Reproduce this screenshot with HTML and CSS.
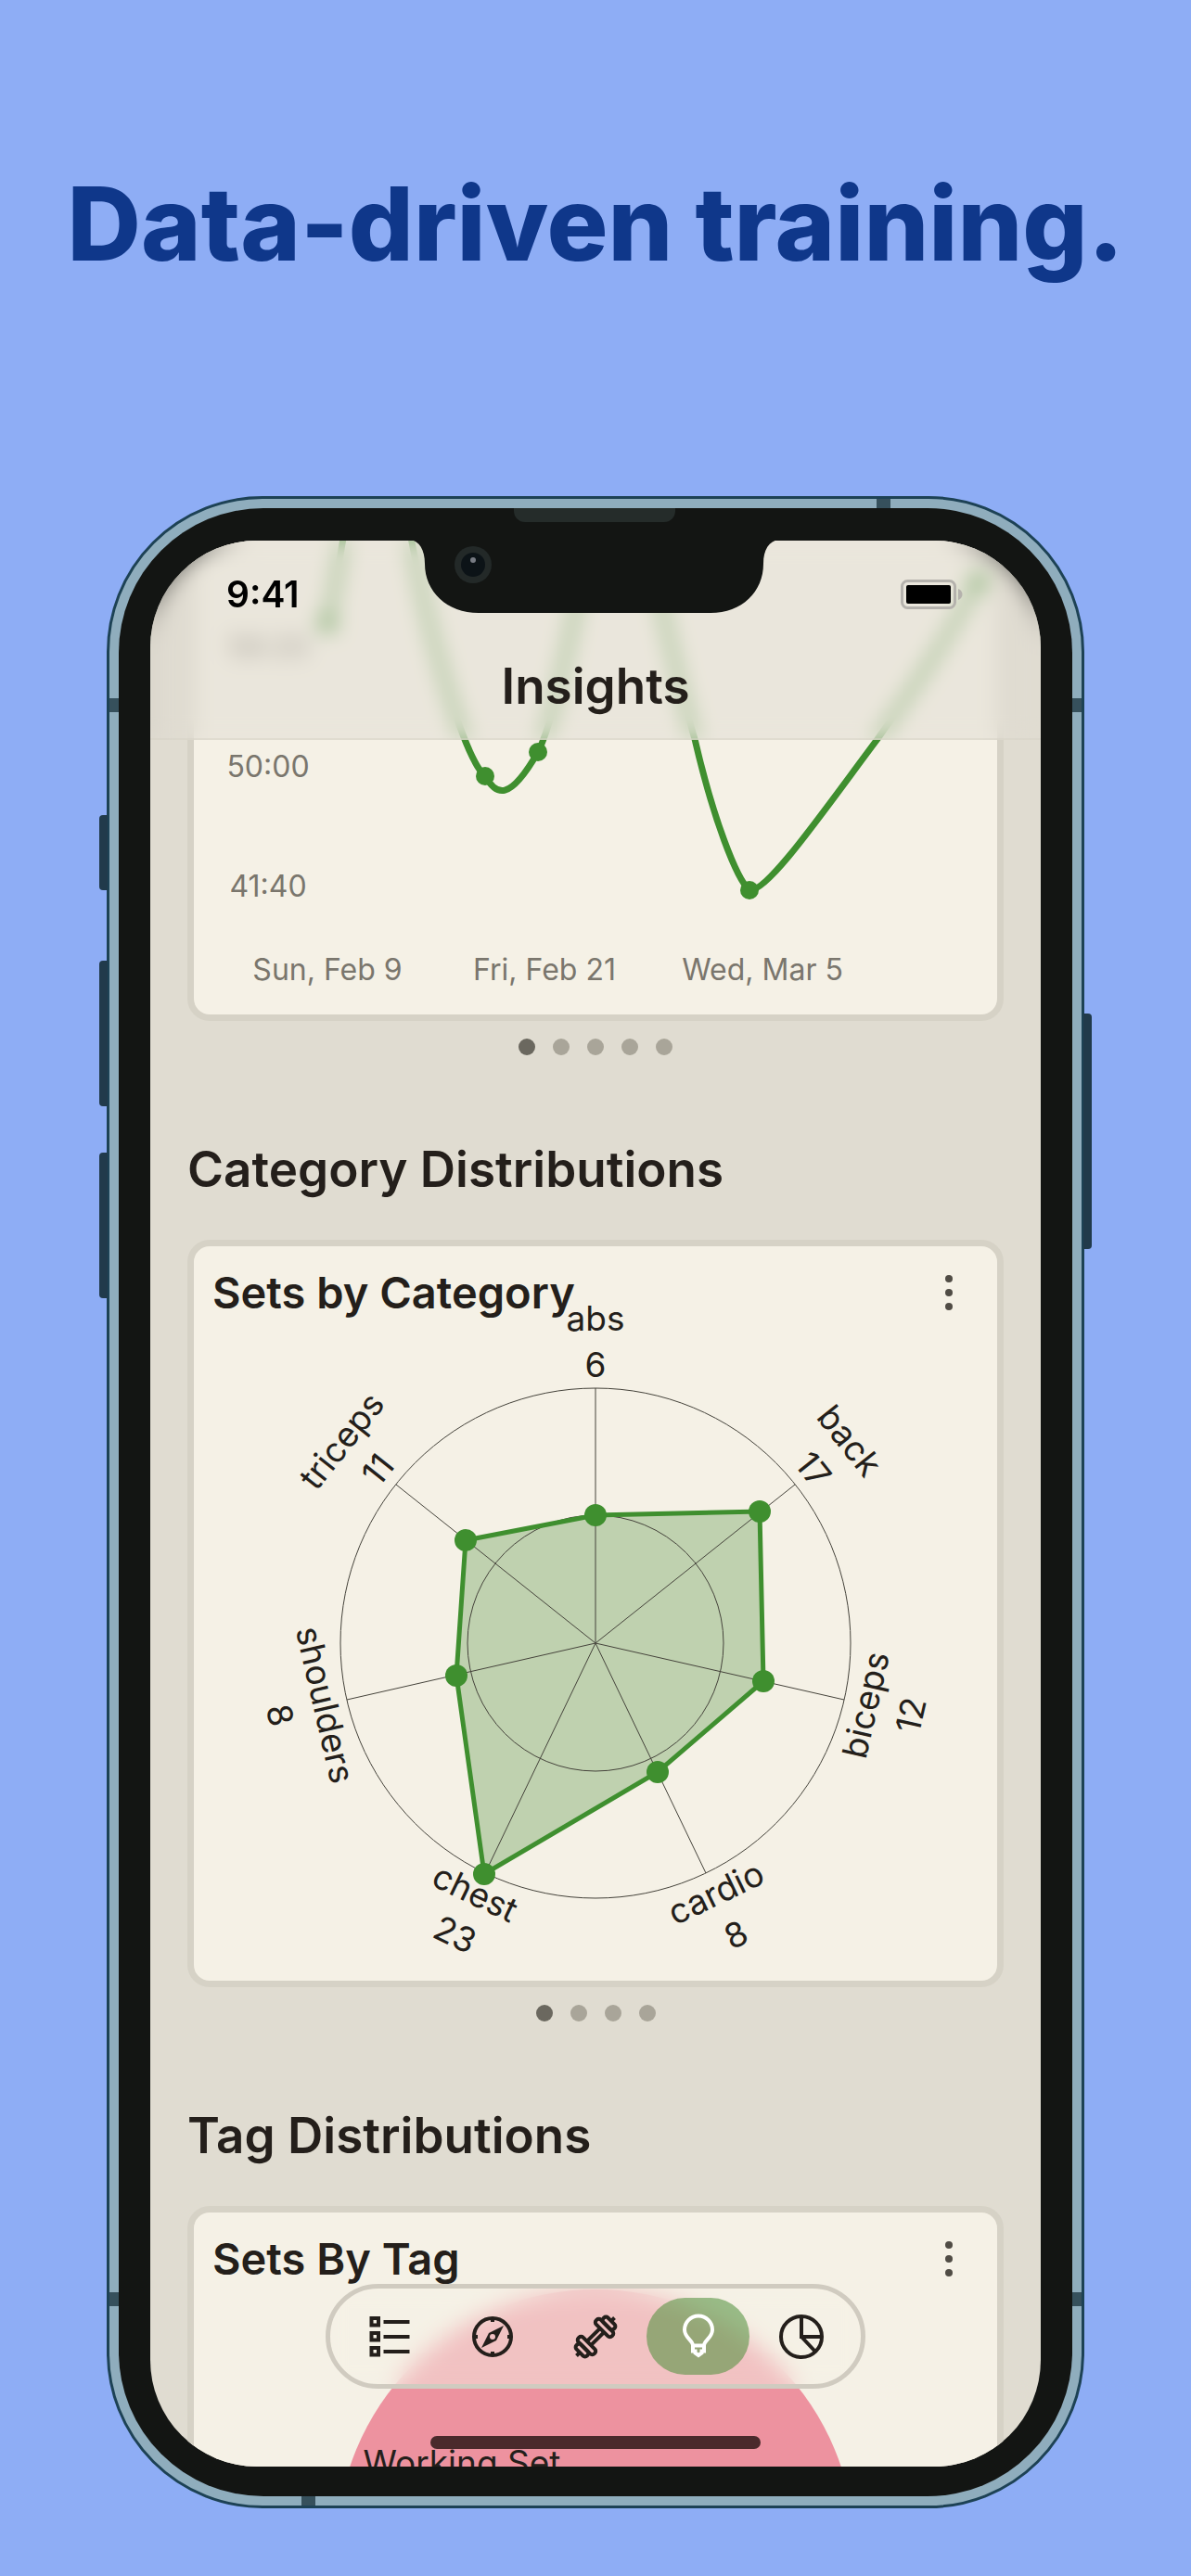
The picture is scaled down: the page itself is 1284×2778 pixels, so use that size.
FILE: index.html
```html
<!DOCTYPE html>
<html lang="en">
<head>
<meta charset="utf-8">
<meta name="viewport" content="width=device-width, initial-scale=1">
<title>Data-driven training.</title>
<link rel="stylesheet" href="styles.css">
</head>
<body>
<main class="page">
  <h1 class="headline">Data-driven training.</h1>

  <div class="phone">
    <span class="side-key key-mute"></span>
    <span class="side-key key-up"></span>
    <span class="side-key key-down"></span>
    <span class="side-key key-power"></span>
    <span class="band band-left band-high"></span>
    <span class="band band-right band-high"></span>
    <span class="band band-left band-low"></span>
    <span class="band band-right band-low"></span>
    <span class="band band-top"></span>
    <span class="band band-bottom"></span>

    <div class="bezel">
      <span class="speaker"></span>
      <div class="screen">
        <div class="feed">
          <section class="card card-scrolled" aria-label="Workout duration">
            <svg class="chart" viewBox="0 0 866 511" role="img" aria-label="Duration over time">
              <path class="trend" d="M144 89C165 0 175 -140 197 -140C217 -140 230 10 262 120C280 185 298 240 314 254C326 275 340 282 371 228C385 200 395 150 411 78C425 10 440 -100 460 -100C480 -100 490 10 506 78C520 140 530 180 540 214C560 300 585 365 599 377C618 380 680 290 737 214C775 160 810 110 846 44"/>
              <g class="point">
                <circle cx="144" cy="89" r="10"/>
                <circle cx="314" cy="254" r="10"/>
                <circle cx="371" cy="228" r="10"/>
                <circle cx="599" cy="377" r="10"/>
                <circle cx="846" cy="44" r="10"/>
              </g>
              <g class="axis-text">
                <text x="80" y="126">58:20</text>
                <text x="80" y="255">50:00</text>
                <text x="80" y="384">41:40</text>
                <text x="144" y="474">Sun, Feb 9</text>
                <text x="378" y="474">Fri, Feb 21</text>
                <text x="613" y="474">Wed, Mar 5</text>
              </g>
            </svg>
          </section>
          <div class="dots"><i class="on"></i><i></i><i></i><i></i><i></i></div>

          <h2 class="section-title">Category Distributions</h2>
          <section class="card">
            <header class="card-head">
              <h3>Sets by Category</h3>
              <button class="more" aria-label="More options"><i></i><i></i><i></i></button>
            </header>
            <svg class="chart" viewBox="0 0 866 712" role="img" aria-label="Sets by category">
              <polygon class="area" points="433,210 610,206 614,389 500,487 313,597 283,383 293,237"/>
              <g class="grid">
                <circle cx="433" cy="348" r="275"/>
                <circle cx="433" cy="348" r="138"/>
                <path d="M433 348V73M433 348L648 177M433 348L701 409M433 348L552 596M433 348L314 596M433 348L165 409M433 348L218 177"/>
              </g>
              <polygon class="outline" points="433,210 610,206 614,389 500,487 313,597 283,383 293,237"/>
              <g class="point">
                <circle cx="433" cy="210" r="12"/>
                <circle cx="610" cy="206" r="12"/>
                <circle cx="614" cy="389" r="12"/>
                <circle cx="500" cy="487" r="12"/>
                <circle cx="313" cy="597" r="12"/>
                <circle cx="283" cy="383" r="12"/>
                <circle cx="293" cy="237" r="12"/>
              </g>
              <g class="spoke-text">
                <g><text x="433" y="11">abs</text><text x="433" y="61">6</text></g>
                <g transform="rotate(51.43 433 348)"><text x="433" y="11">back</text><text x="433" y="61">17</text></g>
                <g transform="rotate(-77.14 433 348)"><text x="433" y="660">biceps</text><text x="433" y="710">12</text></g>
                <g transform="rotate(-25.71 433 348)"><text x="433" y="660">cardio</text><text x="433" y="710">8</text></g>
                <g transform="rotate(25.71 433 348)"><text x="433" y="660">chest</text><text x="433" y="710">23</text></g>
                <g transform="rotate(77.14 433 348)"><text x="433" y="660">shoulders</text><text x="433" y="710">8</text></g>
                <g transform="rotate(-51.43 433 348)"><text x="433" y="11">triceps</text><text x="433" y="61">11</text></g>
              </g>
            </svg>
          </section>
          <div class="dots"><i class="on"></i><i></i><i></i><i></i></div>

          <h2 class="section-title">Tag Distributions</h2>
          <section class="card">
            <header class="card-head">
              <h3>Sets By Tag</h3>
              <button class="more" aria-label="More options"><i></i><i></i><i></i></button>
            </header>
            <svg class="chart" viewBox="0 0 866 712" role="img" aria-label="Sets by tag">
              <circle class="slice" cx="433" cy="282" r="279"/>
              <text class="slice-text" x="289" y="203">Working Set</text>
            </svg>
          </section>
        </div>

        <header class="top-bar">
          <div class="status">
            <span>9:41</span>
            <svg class="battery" viewBox="0 0 68 32" aria-label="Battery full">
              <rect x="1.500" y="1.500" width="57" height="29" rx="6" fill="none" stroke="#b5b2ad" stroke-width="3"/>
              <rect x="6" y="6" width="48" height="20" rx="2"/>
              <path d="M62 10C68 12 68 20 62 22Z" fill="#b5b2ad"/>
            </svg>
          </div>
          <div class="screen-title">Insights</div>
        </header>

        <svg class="notch" viewBox="0 0 398 79" aria-hidden="true">
          <path class="shell" d="M0 0C10 1 16 11 16 26C16 56 40 79 74 79H324C358 79 381 56 381 26C381 11 387 1 398 0Z"/>
          <circle cx="68" cy="27" r="20" fill="#232928"/>
          <circle cx="68" cy="27" r="13" fill="#0c1317"/>
          <circle cx="68" cy="22" r="3" fill="#777b83"/>
        </svg>

        <nav class="tabs" aria-label="Main">
          <a href="#log" aria-label="Log">
            <svg viewBox="0 0 48 48"><path d="M4.500 4h7.500v7.500H4.500zM4.500 20h7.500v7.500H4.500zM4.500 36h7.500v7.500H4.500zM17.500 8h28M17.500 24h28M17.500 40h28"/></svg>
          </a>
          <a href="#explore" aria-label="Explore">
            <svg viewBox="0 0 48 48"><circle cx="24" cy="24" r="20"/><path d="M24 4v4M24 40v4M4 24h4M40 24h4"/><path d="M36 12L28 28L12 36L20 20Z" fill="#241f1b" stroke="none"/><circle cx="24" cy="24" r="3" fill="#f1c2c4" stroke="none"/></svg>
          </a>
          <a href="#workout" aria-label="Workout">
            <svg viewBox="0 0 48 48"><g transform="rotate(-45 24 24)"><rect x="7" y="12" width="7" height="24" rx="3"/><rect x="0" y="16" width="7" height="16" rx="3"/><path d="M-3 22v4M51 22v4M14 21h20M14 27h20"/><rect x="34" y="12" width="7" height="24" rx="3"/><rect x="41" y="16" width="7" height="16" rx="3"/></g></svg>
          </a>
          <a class="current" href="#insights" aria-label="Insights" aria-current="page">
            <svg viewBox="0 0 48 48"><path d="M18 33.500C18 28 9 25 9 16.500A15 15 0 0 1 39 16.500C39 25 30 28 30 33.500ZM18 34v5.500h2.500v2L24 44l3.500-2.500v-2H30V34"/></svg>
          </a>
          <a href="#stats" aria-label="Stats">
            <svg viewBox="0 0 48 48"><circle cx="24" cy="24" r="22"/><path d="M24 2v22h22M24 24l15 16"/></svg>
          </a>
        </nav>
        <span class="home-bar"></span>
      </div>
    </div>
  </div>
</main>
</body>
</html>
```

FILE: styles.css
```css
* { box-sizing: border-box; }

body {
  margin: 0;
  background: #8eadf5;
  color: #241f1b;
  font-family: Inter, "Liberation Sans", sans-serif;
}

h1, h2, h3 { margin: 0; }

.page { padding: 182px 115px 73px; }

.headline {
  margin: 0 -80px 235px;
  color: #0f378a;
  font-size: 110px;
  font-weight: 800;
  line-height: 118px;
  text-align: center;
  white-space: nowrap;
}

/* Device frame */
.phone {
  position: relative;
  padding: 10px;
  border: 3px solid #1d4255;
  border-radius: 168px;
  background: #8fadbd;
}

.bezel {
  position: relative;
  padding: 35px 34px 32px;
  border-radius: 156px;
  background: #131513;
}

.speaker {
  position: absolute;
  top: 0;
  left: 50%;
  width: 174px;
  height: 15px;
  margin-left: -88px;
  border-radius: 0 0 12px 12px;
  background: #252c2a;
}

.side-key {
  position: absolute;
  left: -11px;
  width: 9px;
  height: 157px;
  border-radius: 4px 0 0 4px;
  background: #213a4b;
}
.key-mute { top: 341px; height: 81px; }
.key-up { top: 498px; }
.key-down { top: 705px; }
.key-power {
  top: 555px;
  right: -11px;
  left: auto;
  height: 254px;
  border-radius: 0 4px 4px 0;
}

.band {
  position: absolute;
  width: 11px;
  height: 15px;
  background: #36505c;
}
.band-left { left: 0; }
.band-right { right: 0; }
.band-high { top: 215px; }
.band-low { bottom: 215px; }
.band-top, .band-bottom { width: 15px; height: 11px; }
.band-top { top: 0; right: 206px; }
.band-bottom { bottom: 0; left: 207px; }

.screen {
  position: relative;
  overflow: hidden;
  aspect-ratio: 960 / 2077;
  border-radius: 115px;
  background: #e0dcd1;
}

/* Scrolling content */
.feed { padding: 0 40px; }

.card {
  border: 7px solid #d6d2c6;
  border-radius: 24px;
  background: #f5f1e6;
}
.card-scrolled {
  border-top: 0;
  border-radius: 0 0 24px 24px;
}

.card-head {
  display: flex;
  align-items: center;
  justify-content: space-between;
  padding: 20px 32px 0 20px;
}
.card-head h3 {
  font-size: 47px;
  font-weight: 600;
  line-height: 60px;
}

.more {
  display: flex;
  flex-direction: column;
  align-items: center;
  gap: 7px;
  width: 40px;
  padding: 0;
  border: 0;
  background: none;
}
.more i {
  width: 8px;
  height: 8px;
  border-radius: 50%;
  background: #504c45;
}

.chart {
  display: block;
  width: 100%;
  overflow: visible;
}
.card-scrolled .chart { overflow: hidden; }

.trend {
  fill: none;
  stroke: #3f8f2f;
  stroke-width: 7px;
}
.point { fill: #3f8f2f; }
.axis-text {
  fill: #7a766d;
  font-size: 32px;
  text-anchor: middle;
}
.area { fill: #bfd1af; }
.outline {
  fill: none;
  stroke: #3f8f2f;
  stroke-width: 5px;
}
.grid {
  fill: none;
  stroke: #45433b;
  stroke-width: 1px;
}
.spoke-text, .slice-text {
  fill: #241f1b;
  font-size: 37px;
  text-anchor: middle;
}
.slice { fill: #ed929f; }

.dots {
  display: flex;
  justify-content: center;
  gap: 19px;
  margin: 19px 0 91px;
}
.dots i {
  width: 18px;
  height: 18px;
  border-radius: 50%;
  background: #a9a599;
}
.dots .on { background: #6b685f; }

.section-title {
  margin-bottom: 44px;
  font-size: 53px;
  font-weight: 600;
  line-height: 64px;
}

/* Bars over the content */
.top-bar {
  position: absolute;
  inset: 0 0 auto;
  padding: 38px 0 26px;
  border-bottom: 2px solid rgba(214, 210, 198, 0.5);
  background: rgba(224, 220, 209, 0.5);
  backdrop-filter: blur(11px);
}
.status {
  display: flex;
  align-items: center;
  justify-content: space-between;
  padding: 0 83px 0 82px;
  color: #000;
  font-size: 39px;
  font-weight: 600;
  line-height: 40px;
}
.battery {
  width: 68px;
  height: 32px;
}
.screen-title {
  margin-top: 49px;
  font-size: 53px;
  font-weight: 600;
  line-height: 60px;
  text-align: center;
}

.notch {
  position: absolute;
  top: -1px;
  left: 50%;
  width: 398px;
  margin-left: -200px;
}
.shell { fill: #131513; }

.tabs {
  position: absolute;
  bottom: 84px;
  left: 50%;
  display: flex;
  width: 582px;
  margin-left: -291px;
  padding: 10px 9px;
  border: 5px solid #d0cbc0;
  border-radius: 57px;
  background: rgba(245, 241, 230, 0.5);
  backdrop-filter: blur(12px);
}
.tabs a {
  display: flex;
  flex: 1;
  align-items: center;
  justify-content: center;
  height: 83px;
  border-radius: 42px;
}
.tabs svg {
  width: 48px;
  height: 48px;
  overflow: visible;
  fill: none;
  stroke: #241f1b;
  stroke-width: 4px;
}
.tabs .current { background: rgba(76, 144, 57, 0.55); }
.tabs .current svg { stroke: #fff; }

.home-bar {
  position: absolute;
  bottom: 19px;
  left: 50%;
  width: 356px;
  height: 14px;
  margin-left: -178px;
  border-radius: 7px;
  background: #4a2a2c;
}
```
